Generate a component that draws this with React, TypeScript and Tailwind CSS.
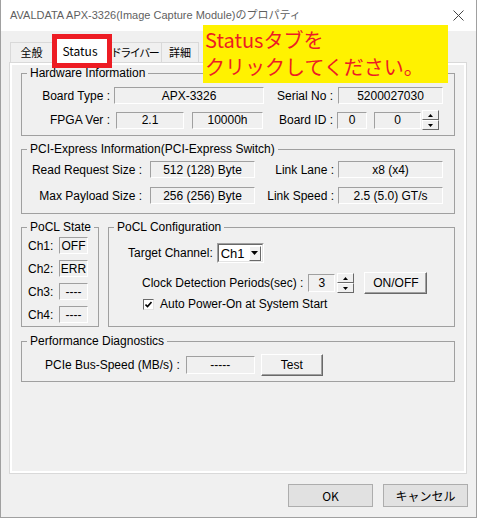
import React from "react";

const ui = "font-['Liberation_Sans',Arial,sans-serif]";
const jp = "font-['Noto_Sans_CJK_JP',sans-serif]";

function Field({ className = "", children }: { className?: string; children?: React.ReactNode }) {
  return (
    <div
      className={`flex h-[17px] shrink-0 items-center justify-center border border-t-[#a0a0a0] border-l-[#a0a0a0] border-r-white border-b-white text-[12px] leading-none ${className}`}
    >
      {children}
    </div>
  );
}

function Label({ className = "", children }: { className?: string; children: React.ReactNode }) {
  return <div className={`shrink-0 whitespace-nowrap text-[12px] leading-none ${className}`}>{children}</div>;
}

function Tri({ down }: { down?: boolean }) {
  return (
    <svg width="5" height="3" viewBox="0 0 5 3">
      <path d={down ? "M0 0H5L2.5 3Z" : "M2.5 0L5 3H0Z"} fill="#000" />
    </svg>
  );
}

function Spinner({ className = "" }: { className?: string }) {
  const half =
    "flex flex-1 items-center justify-center border border-t-white border-l-white border-r-[#696969] border-b-[#696969] bg-[#f0f0f0]";
  return (
    <div className={`flex h-[20px] w-[17px] shrink-0 flex-col ${className}`}>
      <div className={half}>
        <Tri />
      </div>
      <div className={half}>
        <Tri down />
      </div>
    </div>
  );
}

function Button3D({ className = "", children }: { className?: string; children: React.ReactNode }) {
  return (
    <div
      className={`flex h-[22px] shrink-0 items-center justify-center border border-t-white border-l-white border-r-[#696969] border-b-[#696969] bg-[#f0f0f0] text-[12px] leading-none shadow-[inset_-1px_-1px_0_#a0a0a0] ${className}`}
    >
      {children}
    </div>
  );
}

function Group({ title, className = "", children }: { title: string; className?: string; children?: React.ReactNode }) {
  return (
    <fieldset className={`border border-[#a0a0a0] ${className}`}>
      <legend className="ml-[5px] whitespace-nowrap px-[3px] text-[12px] leading-[15px]">{title}</legend>
      {children}
    </fieldset>
  );
}

const tabBase = "flex h-[20px] items-center justify-center whitespace-nowrap border border-b-0 border-[#d9d9d9] bg-[#f0f0f0] text-[11px]";

export default function App() {
  return (
    <div className={`relative h-[518px] w-[477px] overflow-hidden border-x border-b border-[#a0a0a0] bg-[#f0f0f0] text-black ${ui}`}>
      {/* title bar */}
      <div className="flex h-[31px] items-center justify-between bg-white pl-[9px] pr-[12px] font-['Liberation_Sans','Noto_Sans_CJK_JP',sans-serif] text-[11px] text-[#5f5f5f]">
        <span>AVALDATA APX-3326(Image Capture Module)のプロパティ</span>
        <svg width="11" height="11" viewBox="0 0 11 11">
          <path d="M0.5 0.5L10.5 10.5M10.5 0.5L0.5 10.5" stroke="#444" strokeWidth="1" />
        </svg>
      </div>

      {/* tabs */}
      <div className={`ml-[9px] mt-[7px] flex items-end ${jp}`}>
        <div className={`${tabBase} w-[43px]`}>全般</div>
        <div className="-mb-px -ml-px flex h-[25px] w-[56px] items-center justify-center border border-b-0 border-[#d9d9d9] bg-white text-[12px]">
          Status
        </div>
        <div className={`${tabBase} -ml-px w-[55px] tracking-[-1.5px]`}>ドライバー</div>
        <div className={`${tabBase} -ml-px w-[38px]`}>詳細</div>
      </div>

      {/* panel */}
      <div className="ml-[8px] h-[412px] w-[458px] border border-[#d9d9d9] bg-white p-[2px]">
        <div className="flex h-full flex-col bg-[#f0f0f0] px-[9px] pt-px">
          <Group title="Hardware Information" className="h-[70px]">
            <div className="mt-[6px] flex items-center">
              <Label className="w-[88px] text-right">Board Type :</Label>
              <Field className="ml-[4px] w-[150px]">APX-3326</Field>
              <Label className="w-[69px] text-right">Serial No :</Label>
              <Field className="ml-[5px] w-[105px]">5200027030</Field>
            </div>
            <div className="mt-[6px] flex h-[20px] items-center">
              <Label className="w-[88px] text-right">FPGA Ver :</Label>
              <Field className="ml-[6px] w-[68px]">2.1</Field>
              <Field className="ml-[8px] w-[71px]">10000h</Field>
              <Label className="w-[70px] text-right">Board ID :</Label>
              <Field className="ml-[4px] w-[30px]">0</Field>
              <Field className="ml-[7px] w-[47px]">0</Field>
              <Spinner className="ml-px" />
            </div>
          </Group>

          <Group title="PCI-Express Information(PCI-Express Switch)" className="mt-[6px] h-[72px]">
            <div className="mt-[4px] flex items-center">
              <Label className="w-[120px] text-right">Read Request Size :</Label>
              <Field className="ml-[8px] w-[105px]">512 (128) Byte</Field>
              <Label className="w-[79px] text-right">Link Lane :</Label>
              <Field className="ml-[4px] w-[105px]">x8 (x4)</Field>
            </div>
            <div className="mt-[9px] flex items-center">
              <Label className="w-[120px] text-right">Max Payload Size :</Label>
              <Field className="ml-[8px] w-[105px]">256 (256) Byte</Field>
              <Label className="w-[79px] text-right">Link Speed :</Label>
              <Field className="ml-[4px] w-[105px]">2.5 (5.0) GT/s</Field>
            </div>
          </Group>

          <div className="mt-[6px] flex gap-[9px]">
            <Group title="PoCL State" className="h-[107px] w-[78px] shrink-0">
              <div className="mt-[2px] flex flex-col gap-[6px] pl-[6px]">
                {[
                  ["Ch1:", "OFF"],
                  ["Ch2:", "ERR"],
                  ["Ch3:", "----"],
                  ["Ch4:", "----"],
                ].map(([ch, v]) => (
                  <div key={ch} className="flex items-center">
                    <Label className="w-[31px]">{ch}</Label>
                    <Field className="w-[29px]">{v}</Field>
                  </div>
                ))}
              </div>
            </Group>

            <Group title="PoCL Configuration" className="h-[107px] flex-1">
              <div className="mt-[8px] flex h-[20px] items-center pl-[19px]">
                <Label>Target Channel:</Label>
                <div className="ml-[4px] h-[20px] w-[47px] border border-t-[#a0a0a0] border-l-[#a0a0a0] border-r-white border-b-white">
                  <div className="flex h-full items-center border border-t-[#696969] border-l-[#696969] border-r-[#e3e3e3] border-b-[#e3e3e3] bg-white pl-[2px] pr-px">
                    <span className="flex-1 text-[13px] leading-none">Ch1</span>
                    <div className="flex h-[15px] w-[12px] items-center justify-center border border-t-white border-l-white border-r-[#696969] border-b-[#696969] bg-[#f0f0f0]">
                      <svg width="7" height="4" viewBox="0 0 7 4">
                        <path d="M0 0H7L3.5 4Z" fill="#000" />
                      </svg>
                    </div>
                  </div>
                </div>
              </div>
              <div className="mt-[9px] flex h-[22px] items-center pl-[33px]">
                <Label>Clock Detection Periods(sec) :</Label>
                <Field className="ml-[5px] h-[18px] w-[27px]">3</Field>
                <Spinner className="ml-[2px]" />
                <Button3D className="ml-[10px] w-[63px]">ON/OFF</Button3D>
              </div>
              <div className="mt-[4px] flex items-center pl-[34px]">
                <div className="flex h-[11px] w-[11px] items-center justify-center border border-t-[#696969] border-l-[#696969] border-r-[#e3e3e3] border-b-[#e3e3e3] bg-white">
                  <svg width="7" height="7" viewBox="0 0 7 7">
                    <path d="M0.5 3.5L2.5 5.5L6.5 1" stroke="#000" strokeWidth="1.6" fill="none" />
                  </svg>
                </div>
                <Label className="ml-[6px]">Auto Power-On at System Start</Label>
              </div>
            </Group>
          </div>

          <Group title="Performance Diagnostics" className="mt-[7px] h-[48px]">
            <div className="mt-[5px] flex h-[22px] items-center pl-[23px]">
              <Label>PCIe Bus-Speed (MB/s) :</Label>
              <Field className="ml-[6px] h-[18px] w-[69px]">-----</Field>
              <Button3D className="ml-[6px] w-[62px]">Test</Button3D>
            </div>
          </Group>
        </div>
      </div>

      {/* dialog buttons */}
      <div className={`mr-[8px] mt-[10px] flex justify-end gap-[10px] ${jp}`}>
        <div className="flex h-[23px] w-[85px] items-center justify-center border border-[#adadad] bg-[#e1e1e1] text-[12px]">OK</div>
        <div className="flex h-[23px] w-[85px] items-center justify-center border border-[#adadad] bg-[#e1e1e1] text-[12px]">キャンセル</div>
      </div>

      {/* annotation overlays */}
      <div className="absolute left-[51px] top-[34px] h-[34px] w-[60px] border-[5px] border-[#ed1c24]" />
      <div className="absolute left-[202px] top-[25px] h-[58px] w-[245px] bg-[#fff200] pl-[2px] pt-px font-['Noto_Sans_CJK_JP',sans-serif] text-[20px] leading-[27px] text-[#ed1c24]">
        Statusタブを
        <br />
        クリックしてください。
      </div>
    </div>
  );
}
